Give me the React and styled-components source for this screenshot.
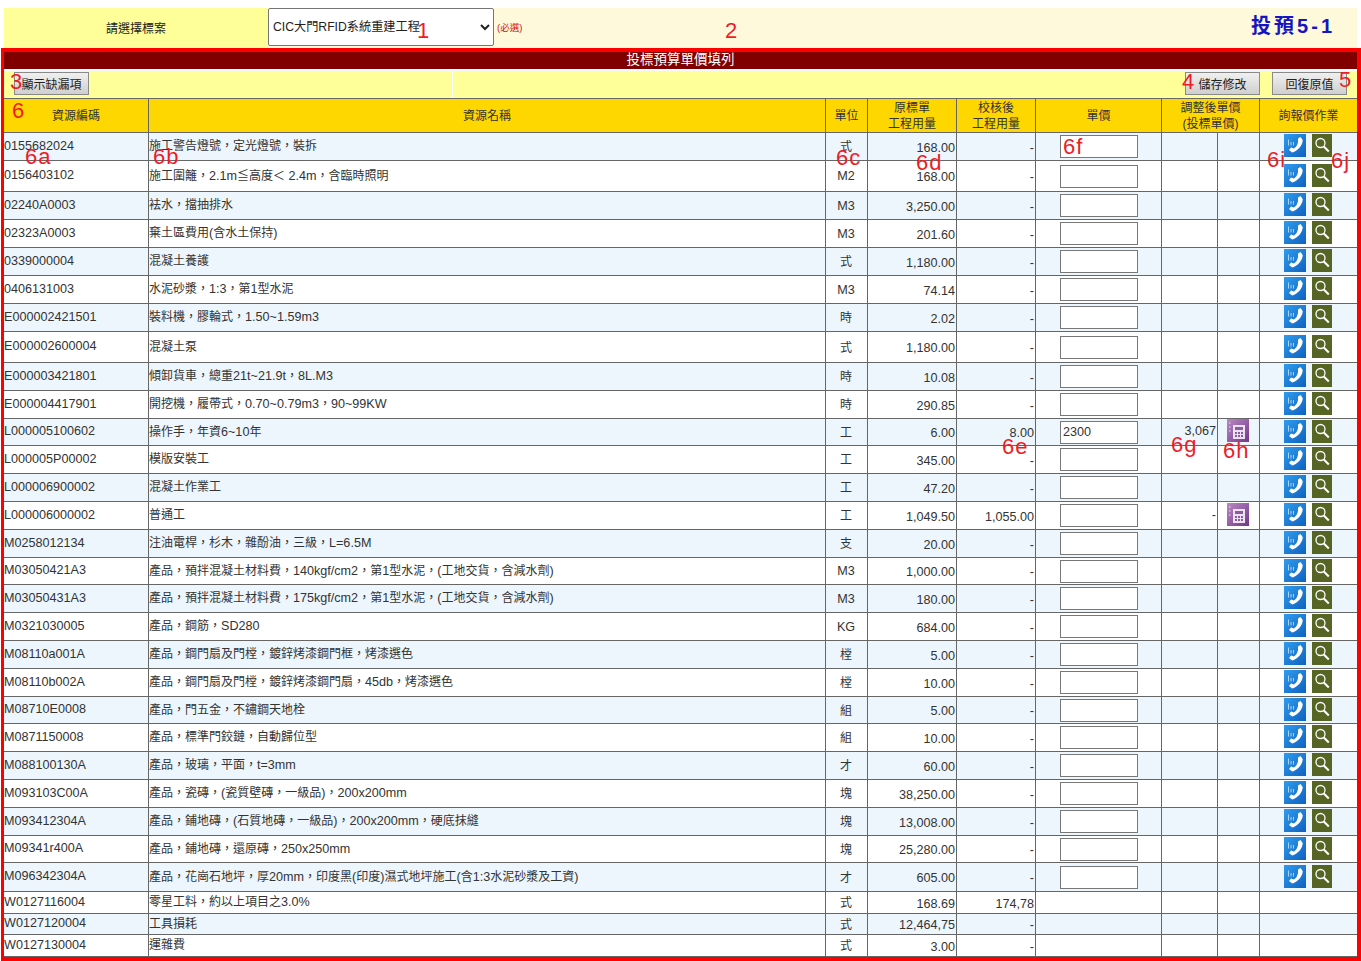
import React from "react";
import styled, { createGlobalStyle } from "styled-components";

const GlobalStyle = createGlobalStyle`
  html, body {
    margin: 0;
    padding: 0;
    background: #fff;
  }
  body {
    font-family: "Liberation Sans", "Noto Sans CJK TC", sans-serif;
    font-size: 12.6px;
    color: #222;
  }
`;

// STYLED
const Page = styled.div`
  position: relative;
  width: 1361px;
  height: 961px;
  padding-top: 8px;
  box-sizing: border-box;
  overflow: hidden;
`;

const TopBar = styled.div`
  display: grid;
  grid-template-columns: 264px 1fr;
  height: 40px;
  margin: 0 4px 0 4px;
  background: #fff9dc;
`;

const TopLabel = styled.div`
  display: flex;
  align-items: center;
  justify-content: center;
  padding-bottom: 2px;
  box-sizing: border-box;
  background: #ffff99;
  font-size: 12px;
`;

const TopField = styled.div`
  display: flex;
  align-items: center;
  position: relative;
`;

const ProjectSelect = styled.select`
  width: 226px;
  height: 38px;
  margin-top: -2px;
  padding-left: 0;
  border: 1px solid #767676;
  border-radius: 2px;
  background: #fff;
  font-family: inherit;
  font-size: 12.2px;
  color: #222;
`;

const Required = styled.span`
  margin: -2px 0 0 3px;
  font-size: 9.5px;
  color: #d01010;
`;

const PageCode = styled.div`
  position: absolute;
  right: 22px;
  top: 2px;
  font-size: 20px;
  font-weight: 700;
  letter-spacing: 3px;
  color: #1414c4;
`;

const Frame = styled.div`
  margin-left: 1px;
  width: 1360px;
  height: 913px;
  box-sizing: border-box;
  border: 3px solid #ff0000;
  border-top-width: 4px;
  border-bottom-width: 5px;
  border-right-width: 4px;
`;

const TitleBar = styled.div`
  height: 17px;
  line-height: 16px;
  margin-bottom: 2px;
  background: #800000;
  color: #fff;
  text-align: center;
  font-size: 13.5px;
`;

const Toolbar = styled.div`
  display: grid;
  grid-template-columns: 448px 1fr;
  column-gap: 1px;
  height: 26px;
  margin-bottom: 1px;
`;

const ToolCell = styled.div`
  display: flex;
  align-items: center;
  justify-content: ${(p) => (p.$end ? "flex-end" : "flex-start")};
  gap: 12px;
  height: 26px;
  box-sizing: border-box;
  padding: 0 10px;
  background: #ffff99;
`;

const ToolButton = styled.button`
  width: 75px;
  height: 23px;
  padding: 0;
  margin-top: -1px;
  border: 1px solid #8a8a8a;
  background: linear-gradient(#f0f0f0, #cfcfcf);
  font-family: inherit;
  font-size: 12px;
  color: #222;
`;

const Table = styled.table`
  table-layout: fixed;
  width: 1353px;
  border-collapse: separate;
  border-spacing: 0;
`;

const HeadCell = styled.th`
  height: 35px;
  padding: 1px 0 0;
  box-sizing: border-box;
  background: #ffd700;
  border-right: 1px solid #666;
  border-bottom: 1px solid #666;
  border-top: 1px solid #666;
  font-size: 12px;
  font-weight: 400;
  line-height: 16px;
  text-align: center;
  color: #333;

  &:last-child {
    border-right: 0;
  }
`;

const Row = styled.tr`
  background: ${(p) => (p.$tinted ? "#edf6fd" : "#fff")};
`;

const Cell = styled.td`
  padding: 0 1px 0 0;
  box-sizing: border-box;
  border-right: 1px solid #666;
  border-bottom: 1px solid #666;
  overflow: visible;
  white-space: nowrap;
  text-align: ${(p) => p.$align || "left"};

  &:last-child {
    border-right: 0;
  }
`;

const CodeText = styled.span`
  position: relative;
  top: -1px;
  color: #333;
`;

const NameText = styled.span`
  position: relative;
  top: -2px;
  color: #333;
`;

const NumText = styled.span`
  position: relative;
  top: 1px;
  color: #333;
`;

const UnitText = styled.span`
  position: relative;
  top: ${(p) => (p.$latin ? "0" : "-1px")};
  color: #333;
`;

const Han = styled.span`
  font-size: 12px;
`;

const PriceInput = styled.input`
  display: block;
  width: 78px;
  height: 23px;
  margin-left: 24px;
  padding: 0 0 0 2px;
  box-sizing: border-box;
  border: 1px solid #777;
  background: #fff;
  font-family: inherit;
  font-size: 12.6px;
  color: #333;
`;

const IconRow = styled.div`
  display: flex;
  align-items: center;
  gap: 6px;
  margin-top: -2px;
  padding-left: 24px;
`;

const IconBox = styled.svg`
  display: block;
  flex: none;
`;

const CalcWrap = styled.div`
  display: flex;
  justify-content: flex-end;
  margin-top: -3px;
  padding-right: 9px;
`;

const Mark = styled.span`
  position: absolute;
  left: ${(p) => p.$x}px;
  top: ${(p) => p.$y}px;
  font-size: 22px;
  line-height: 21px;
  letter-spacing: 1px;
  color: #ee1c25;
  pointer-events: none;
`;

const COLUMNS = [145, 677, 42, 89, 79, 126, 56, 42, 97];

const MARKS = [
  ["1", 417, 20],
  ["2", 725, 20],
  ["3", 10, 71],
  ["4", 1182, 71],
  ["5", 1339, 69],
  ["6", 12, 100],
  ["6a", 25, 146],
  ["6b", 153, 146],
  ["6c", 836, 147],
  ["6d", 916, 152],
  ["6e", 1002, 436],
  ["6f", 1063, 136],
  ["6g", 1171, 434],
  ["6h", 1223, 440],
  ["6i", 1267, 149],
  ["6j", 1331, 150],
];

// code, name, unit, original qty, adjusted qty, row height
const ROWS = [
  ["0155682024", "施工警告燈號，定光燈號，裝拆", "式", "168.00", "-", 28],
  ["0156403102", "施工圍籬，2.1m≦高度＜ 2.4m，含臨時照明", "M2", "168.00", "-", 31],
  ["02240A0003", "袪水，擋抽排水", "M3", "3,250.00", "-", 28],
  ["02323A0003", "棄土區費用(含水土保持)", "M3", "201.60", "-", 28],
  ["0339000004", "混凝土養護", "式", "1,180.00", "-", 28],
  ["0406131003", "水泥砂漿，1:3，第1型水泥", "M3", "74.14", "-", 28],
  ["E000002421501", "裝料機，膠輪式，1.50~1.59m3", "時", "2.02", "-", 28],
  ["E000002600004", "混凝土泵", "式", "1,180.00", "-", 31],
  ["E000003421801", "傾卸貨車，總重21t~21.9t，8L.M3", "時", "10.08", "-", 28],
  ["E000004417901", "開挖機，履帶式，0.70~0.79m3，90~99KW", "時", "290.85", "-", 28],
  ["L000005100602", "操作手，年資6~10年", "工", "6.00", "8.00", 27],
  ["L000005P00002", "模版安裝工", "工", "345.00", "-", 28],
  ["L000006900002", "混凝土作業工", "工", "47.20", "-", 28],
  ["L000006000002", "普通工", "工", "1,049.50", "1,055.00", 28],
  ["M0258012134", "注油電桿，杉木，雜酚油，三級，L=6.5M", "支", "20.00", "-", 28],
  ["M03050421A3", "產品，預拌混凝土材料費，140kgf/cm2，第1型水泥，(工地交貨，含減水劑)", "M3", "1,000.00", "-", 27],
  ["M03050431A3", "產品，預拌混凝土材料費，175kgf/cm2，第1型水泥，(工地交貨，含減水劑)", "M3", "180.00", "-", 28],
  ["M0321030005", "產品，鋼筋，SD280", "KG", "684.00", "-", 28],
  ["M08110a001A", "產品，鋼門扇及門樘，鍍鋅烤漆鋼門框，烤漆選色", "樘", "5.00", "-", 28],
  ["M08110b002A", "產品，鋼門扇及門樘，鍍鋅烤漆鋼門扇，45db，烤漆選色", "樘", "10.00", "-", 28],
  ["M08710E0008", "產品，門五金，不鏽鋼天地栓", "組", "5.00", "-", 27],
  ["M0871150008", "產品，標準門鉸鏈，自動歸位型", "組", "10.00", "-", 28],
  ["M088100130A", "產品，玻璃，平面，t=3mm", "才", "60.00", "-", 28],
  ["M093103C00A", "產品，瓷磚，(瓷質壁磚，一級品)，200x200mm", "塊", "38,250.00", "-", 28],
  ["M093412304A", "產品，鋪地磚，(石質地磚，一級品)，200x200mm，硬底抹縫", "塊", "13,008.00", "-", 28],
  ["M09341r400A", "產品，鋪地磚，還原磚，250x250mm", "塊", "25,280.00", "-", 27],
  ["M096342304A", "產品，花崗石地坪，厚20mm，印度黑(印度)濕式地坪施工(含1:3水泥砂漿及工資)", "才", "605.00", "-", 29],
  ["W0127116004", "零星工料，約以上項目之3.0%", "式", "168.69", "174,78", 22],
  ["W0127120004", "工具損耗", "式", "12,464,75", "-", 21],
  ["W0127130004", "運雜費", "式", "3.00", "-", 22],
];

const CALC_ROWS = { L000005100602: "3,067", L000006000002: "-" };

// the Han glyphs are a little smaller than the latin ones in this table
function MixedText({ text }) {
  return text.split(/([\u3000-\u9fff\uff00-\uffef≦]+)/).map((part, i) =>
    i % 2 ? <Han key={i}>{part}</Han> : part
  );
}

function QuoteIcon() {
  return (
    <IconBox width="22" height="23" viewBox="0 0 22 23">
      <defs>
        <linearGradient id="quoteBlue" x1="0" y1="0" x2="1" y2="1">
          <stop offset="0" stopColor="#2f9bee" />
          <stop offset="1" stopColor="#0f62c0" />
        </linearGradient>
      </defs>
      <rect width="22" height="23" fill="url(#quoteBlue)" />
      <path d="M4.500 5.500v6M7 8v3.500M9.500 8v3.500" stroke="#a9d4f7" strokeWidth="1" fill="none" />
      <path
        d="M14 4.500l2.500-1.500 2.200 3c.2 4.500-4.500 11-10.500 12.500l-3.200-2.500 2-2.500 3 1c2-1.300 3.500-3.500 4-6.500z"
        fill="#fff"
      />
    </IconBox>
  );
}

function SearchIcon() {
  return (
    <IconBox width="20" height="23" viewBox="0 0 20 23">
      <rect width="20" height="23" fill="#566424" />
      <circle cx="8.500" cy="9" r="4.500" fill="none" stroke="#fff" strokeWidth="1.300" />
      <path d="M11.800 12.500l5 5" stroke="#fff" strokeWidth="2" />
    </IconBox>
  );
}

function CalcIcon() {
  return (
    <IconBox width="22" height="23" viewBox="0 0 22 23">
      <defs>
        <linearGradient id="calcPurple" x1="0" y1="0" x2="1" y2="1">
          <stop offset="0" stopColor="#b98ac4" />
          <stop offset="1" stopColor="#73378a" />
        </linearGradient>
      </defs>
      <rect width="22" height="23" fill="url(#calcPurple)" />
      <rect x="6" y="6" width="12" height="14" fill="#ece2ef" />
      <rect x="8" y="8" width="8" height="3" fill="#8e5aa0" />
      <path
        d="M8 13h2v2H8zM11 13h2v2h-2zM14 13h2v2h-2zM8 16h2v2H8zM11 16h2v2h-2zM14 16h2v2h-2z"
        fill="#8e5aa0"
      />
      <path d="M2 4h1.500M2 8h1.500M2 12h1.500" stroke="#f0dcf4" strokeWidth="1" />
    </IconBox>
  );
}

function DataRow({ row, index }) {
  const [code, name, unit, qty, adjusted, height] = row;
  const isWork = code[0] !== "W";
  const calc = CALC_ROWS[code];
  return (
    <Row $tinted={index % 2 === 0} style={{ height }}>
      <Cell><CodeText>{code}</CodeText></Cell>
      <Cell><NameText><MixedText text={name} /></NameText></Cell>
      <Cell $align="center">
        <UnitText $latin={/^[A-Z]/.test(unit)}><MixedText text={unit} /></UnitText>
      </Cell>
      <Cell $align="right"><NumText>{qty}</NumText></Cell>
      <Cell $align="right"><NumText>{adjusted}</NumText></Cell>
      <Cell>{isWork && <PriceInput defaultValue={code === "L000005100602" ? "2300" : ""} />}</Cell>
      <Cell $align="right">{calc && <CodeText>{calc}</CodeText>}</Cell>
      <Cell>{calc && <CalcWrap><CalcIcon /></CalcWrap>}</Cell>
      <Cell>
        {isWork && (
          <IconRow>
            <QuoteIcon />
            <SearchIcon />
          </IconRow>
        )}
      </Cell>
    </Row>
  );
}

export default function App() {
  return (
    <Page>
      <GlobalStyle />
      <TopBar>
        <TopLabel>請選擇標案</TopLabel>
        <TopField>
          <ProjectSelect defaultValue="cic">
            <option value="cic">CIC大門RFID系統重建工程</option>
          </ProjectSelect>
          <Required>(必選)</Required>
          <PageCode>投預5-1</PageCode>
        </TopField>
      </TopBar>
      <Frame>
        <TitleBar>投標預算單價填列</TitleBar>
        <Toolbar>
          <ToolCell>
            <ToolButton>顯示缺漏項</ToolButton>
          </ToolCell>
          <ToolCell $end>
            <ToolButton>儲存修改</ToolButton>
            <ToolButton>回復原值</ToolButton>
          </ToolCell>
        </Toolbar>
        <Table>
          <colgroup>
            {COLUMNS.map((w, i) => (
              <col key={i} width={w} />
            ))}
          </colgroup>
          <thead>
            <tr>
              <HeadCell>資源編碼</HeadCell>
              <HeadCell>資源名稱</HeadCell>
              <HeadCell>單位</HeadCell>
              <HeadCell>原標單<br />工程用量</HeadCell>
              <HeadCell>校核後<br />工程用量</HeadCell>
              <HeadCell>單價</HeadCell>
              <HeadCell colSpan={2}>調整後單價<br />(投標單價)</HeadCell>
              <HeadCell>詢報價作業</HeadCell>
            </tr>
          </thead>
          <tbody>
            {ROWS.map((row, i) => (
              <DataRow key={row[0]} row={row} index={i} />
            ))}
          </tbody>
        </Table>
      </Frame>
      {MARKS.map(([text, x, y]) => (
        <Mark key={text} $x={x} $y={y}>{text}</Mark>
      ))}
    </Page>
  );
}
